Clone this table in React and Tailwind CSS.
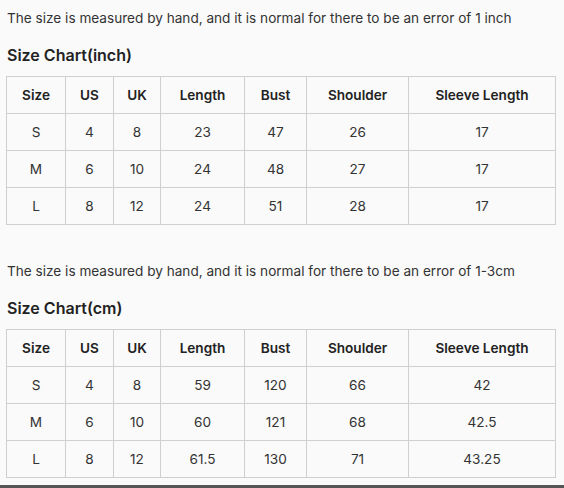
const headers = ["Size", "US", "UK", "Length", "Bust", "Shoulder", "Sleeve Length"];
const widths = ["w-[59px]", "w-[48px]", "w-[47px]", "w-[84px]", "w-[62px]", "w-[102px]", "w-[147px]"];

const inchRows = [
  ["S", "4", "8", "23", "47", "26", "17"],
  ["M", "6", "10", "24", "48", "27", "17"],
  ["L", "8", "12", "24", "51", "28", "17"],
];

const cmRows = [
  ["S", "4", "8", "59", "120", "66", "42"],
  ["M", "6", "10", "60", "121", "68", "42.5"],
  ["L", "8", "12", "61.5", "130", "71", "43.25"],
];

const SizeTable = ({ rows }) => (
  <table className="table-fixed w-[549px] border-collapse text-center text-[13.6px]">
    <thead>
      <tr>
        {headers.map((h, i) => (
          <th key={h} className={`${widths[i]} h-[37px] border border-[#cfcfcf] font-semibold text-[#222]`}>
            {h}
          </th>
        ))}
      </tr>
    </thead>
    <tbody>
      {rows.map((row) => (
        <tr key={row[0]}>
          {row.map((cell, i) => (
            <td key={i} className="h-[37px] border border-[#cfcfcf] text-[#333]">
              {cell}
            </td>
          ))}
        </tr>
      ))}
    </tbody>
  </table>
);

const Section = ({ note, title, rows }) => (
  <section>
    <p className="pl-px text-[13.6px] leading-5 text-[#333]">{note}</p>
    <h2 className="mt-[17px] pl-px text-[16px] leading-5 font-semibold text-[#222]">{title}</h2>
    <div className="mt-[11px]">
      <SizeTable rows={rows} />
    </div>
  </section>
);

export default function App() {
  return (
    <div className="w-[564px] h-[488px] bg-[#fafafa] font-['Inter',sans-serif] overflow-hidden">
      <div className="px-[6px] pt-2 h-[485px]">
        <Section
          note="The size is measured by hand, and it is normal for there to be an error of 1 inch"
          title="Size Chart(inch)"
          rows={inchRows}
        />
        <div className="mt-9">
          <Section
            note="The size is measured by hand, and it is normal for there to be an error of 1-3cm"
            title="Size Chart(cm)"
            rows={cmRows}
          />
        </div>
      </div>
      <div className="border-t-[3px] border-[#555]" />
    </div>
  );
}
